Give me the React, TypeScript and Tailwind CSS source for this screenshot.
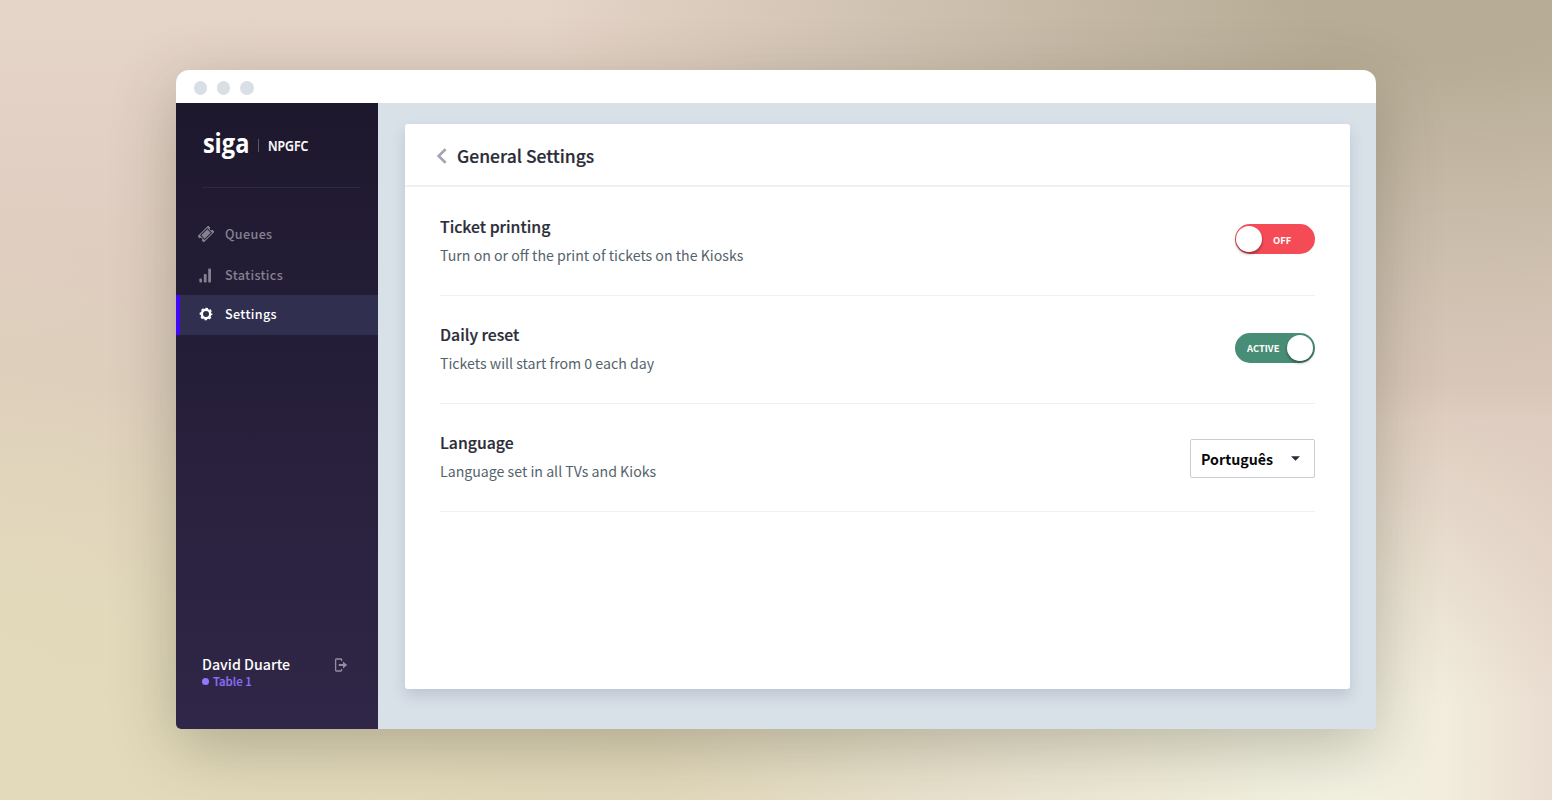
import React from "react";

const sans = "font-['Noto_Sans_CJK_SC','Noto_Sans',sans-serif]";

function TicketIcon() {
  return (
    <svg width="16" height="16" viewBox="0 0 16 16" fill="none">
      <g transform="rotate(-45 8 8)">
        <path fill="#85818f" fillRule="evenodd" d="M.4 3.6h15.2v2.8a1.6 1.6 0 0 0 0 3.2v2.8H.4V9.6a1.6 1.6 0 0 0 0-3.2zM2.8 4.7v6.6h10.4V4.7z" />
        <path fill="#85818f" d="M3.7 5.6h8.6v4.8H3.7z" />
      </g>
    </svg>
  );
}

function BarsIcon() {
  return (
    <svg width="14" height="16" viewBox="0 0 14 16" fill="#85818f">
      <rect x=".4" y="10.5" width="2.6" height="4" rx=".8" />
      <rect x="4.8" y="6" width="2.8" height="8.5" rx=".8" />
      <rect x="9.2" y=".5" width="2.8" height="14" rx=".8" />
    </svg>
  );
}

function GearIcon() {
  return (
    <svg width="14" height="14" viewBox="0 0 14 14" fill="none">
      <circle cx="7" cy="7" r="4.2" stroke="#fff" strokeWidth="2.4" />
      <circle cx="7" cy="7" r="5.6" stroke="#fff" strokeWidth="1.5" strokeDasharray="2.5 1.898" strokeDashoffset="1.25" />
    </svg>
  );
}

function LogoutIcon() {
  return (
    <svg width="14" height="14" viewBox="0 0 14 14" fill="none">
      <path d="M7.6 3V1.8a.8.8 0 0 0-.8-.8H2.4a.8.8 0 0 0-.8.8v10.4a.8.8 0 0 0 .8.8h4.4a.8.8 0 0 0 .8-.8V11" stroke="#928e9d" strokeWidth="1.3" />
      <path d="M4.8 5.9h4.2V3.5L13.2 7 9 10.5V8.1H4.8z" fill="#928e9d" />
    </svg>
  );
}

function Setting({ title, text, children }: { title: string; text: string; children: React.ReactNode }) {
  return (
    <div className="flex h-[107.8px] items-start justify-between border-b border-[#efeff1] pt-[26.6px]">
      <div className="whitespace-nowrap">
        <h2 className="text-[15.8px] leading-[24px] font-medium text-[#2b2d38] [-webkit-text-stroke:0.2px_#2b2d38]">{title}</h2>
        <p className="mt-[4px] text-[14.16px] leading-[24px] text-[#54636b]">{text}</p>
      </div>
      {children}
    </div>
  );
}

export default function App() {
  return (
    <div
      className={`${sans} h-[800px] w-[1552px] overflow-hidden bg-[radial-gradient(ellipse_900px_420px_at_1440px_0px,#b7ad96_15%,#b7ad9600_100%),radial-gradient(ellipse_420px_620px_at_0px_800px,#e3dabb_10%,#e3dabb00_100%),linear-gradient(to_bottom,#e5d4c8_0%,#dccabd_48%,#dccabd00_88%),linear-gradient(to_right,#e4dbbc_0%,#e2d8bb_42%,#eae3cf_62%,#f3f2e2_86%,#f2eddd_93%,#eaddd1_100%)] px-[176px] pt-[70px]`}
    >
      <div className="flex h-[659px] w-[1200px] flex-col overflow-hidden rounded-t-[13px] rounded-b-[5px] bg-white shadow-[0_18px_64px_rgba(60,60,40,0.3)]">
        <div className="flex h-[33px] shrink-0 items-center gap-[9.8px] pt-[3px] pl-[17.5px]">
          <span className="size-[13.5px] rounded-full bg-[#d9dfe5]" />
          <span className="size-[13.5px] rounded-full bg-[#d9dfe5]" />
          <span className="size-[13.5px] rounded-full bg-[#d9dfe5]" />
        </div>
        <div className="flex min-h-0 flex-1">
          <aside className="flex w-[202px] shrink-0 flex-col bg-linear-to-b from-[#1e182e] to-[#302748]">
            <div className="ml-[26px] flex h-[85px] w-[158px] shrink-0 items-start border-b border-[#2f293d] pt-[24px] text-white">
              <span className="w-[47px] origin-left scale-x-[0.89] pl-px font-['Open_Sans',sans-serif] text-[26.5px] leading-[33px] font-bold">siga</span>
              <span className="mt-[12px] ml-[9px] h-[13px] w-px bg-[#5b5668]" />
              <span className="mt-[9px] ml-[9px] origin-left scale-x-[0.86] font-['Open_Sans',sans-serif] text-[14.2px] leading-[20px] font-semibold [-webkit-text-stroke:0.2px_#fff]">NPGFC</span>
            </div>
            <nav className="mt-[26px] flex flex-col text-[12.6px] font-medium tracking-[0.35px] text-[#85818f]">
              <a className="flex h-[41px] items-center pb-px pl-[22px]"><TicketIcon /><span className="ml-[11px]">Queues</span></a>
              <a className="flex h-[40px] items-center pt-px pl-[23px]"><BarsIcon /><span className="ml-[12px]">Statistics</span></a>
              <a className="flex h-[40px] items-center border-l-4 border-[#4209f7] bg-[#312f50] pb-[2px] pl-[19px] text-white"><GearIcon /><span className="ml-[12px]">Settings</span></a>
            </nav>
            <div className="mt-auto mb-[41px] ml-[26px] flex w-[146px] justify-between">
              <div className="whitespace-nowrap">
                <div className="-mt-px text-[14.2px] leading-[20px] font-medium text-white">David Duarte</div>
                <div className="flex items-center gap-[4px] text-[11.4px] leading-[14px] font-medium text-[#8b70f8] [-webkit-text-stroke:0.15px_#8b70f8]">
                  <span className="size-[7px] rounded-full bg-[#9078ff]" />
                  Table 1
                </div>
              </div>
              <div className="pt-[3px]"><LogoutIcon /></div>
            </div>
          </aside>
          <main className="flex-1 bg-[#d8e0e8] pt-[21px] pl-[27px]">
            <section className="h-[565px] w-[945px] rounded-[3px] bg-white shadow-[0_7px_14px_rgba(70,85,110,0.18)]">
              <header className="flex h-[63px] items-center border-b-2 border-[#f0f0f2] pt-[2px] pl-[30.5px]">
                <svg width="12" height="16" viewBox="0 0 12 16" fill="none">
                  <path d="M9.6 1.2L2.6 8l7 6.8" stroke="#a5a4b3" strokeWidth="2.6" />
                </svg>
                <h1 className="ml-[9.5px] text-[17.5px] leading-[26px] font-medium text-[#2b2d38] [-webkit-text-stroke:0.2px_#2b2d38]">General Settings</h1>
              </header>
              <div className="mr-[35px] ml-[35px] pt-[1.5px]">
                <Setting title="Ticket printing" text="Turn on or off the print of tickets on the Kiosks">
                  <button className="mt-[9.2px] flex h-[30px] w-[80px] items-center rounded-full bg-[#f44b57] pl-[1px] text-white">
                    <span className="size-[26px] rounded-full bg-white shadow-[0_2px_3px_rgba(0,0,0,0.4)]" />
                    <span className="mt-px ml-[11px] text-[9.4px] font-bold">OFF</span>
                  </button>
                </Setting>
                <Setting title="Daily reset" text="Tickets will start from 0 each day">
                  <button className="mt-[10.4px] flex h-[30px] w-[80px] items-center rounded-full bg-[#488d75] pl-[12px] text-white">
                    <span className="text-[9.4px] font-bold">ACTIVE</span>
                    <span className="mr-[2px] ml-auto size-[26px] rounded-full bg-white shadow-[0_2px_3px_rgba(0,0,0,0.4)]" />
                  </button>
                </Setting>
                <Setting title="Language" text="Language set in all TVs and Kioks">
                  <button className="mt-[8.4px] flex h-[39px] w-[125px] items-center justify-between rounded-[2px] border border-[#c9cdd1] pr-[14px] pl-[10px] text-[14.2px] font-bold text-[#08080c]">
                    <span className="mt-[2px]">Português</span>
                    <svg width="9" height="5" viewBox="0 0 9 5"><path d="M0 .3h9L4.5 4.8z" fill="#2b2940" /></svg>
                  </button>
                </Setting>
              </div>
            </section>
          </main>
        </div>
      </div>
    </div>
  );
}
